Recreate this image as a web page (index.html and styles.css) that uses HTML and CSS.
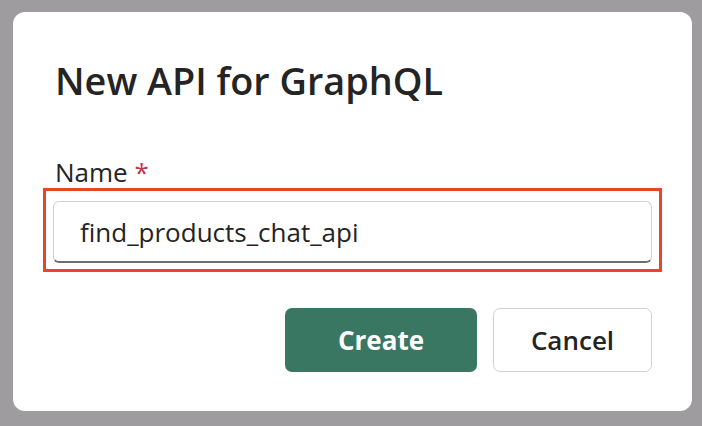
FILE: index.html
```html
<!DOCTYPE html>
<html>
<head>
<meta charset="utf-8">
<link rel="stylesheet" href="styles.css">
</head>
<body>
<div class="dialog">
  <h1 class="title">New API for GraphQL</h1>
  <label class="label">Name <span class="req">*</span></label>
  <div class="highlight">
    <div class="input">find_products_chat_api</div>
  </div>
  <div class="actions">
    <button class="btn primary">Create</button>
    <button class="btn secondary">Cancel</button>
  </div>
</div>
</body>
</html>
```
FILE: styles.css
```css
html, body {
  margin: 0;
  padding: 0;
}
body {
  background: #9e9c9f;
  width: 702px;
  height: 426px;
  overflow: hidden;
  font-family: "Open Sans", "Noto Sans", sans-serif;
  color: #242424;
}
.dialog {
  box-sizing: border-box;
  margin: 12px 0 0 13px;
  width: 679px;
  height: 399px;
  background: #fff;
  border-radius: 12px;
  padding: 46px 40px 0 42px;
  display: flex;
  flex-direction: column;
}
.title {
  margin: 0;
  font-size: 37.8px;
  line-height: 45px;
  font-weight: 600;
  color: #242424;
}
.label {
  margin-top: 53px;
  font-size: 26px;
  line-height: 32px;
  color: #242424;
}
.req {
  color: #c4314b;
}
.highlight {
  margin-left: -12px;
  width: 619px;
  height: 84px;
  box-sizing: border-box;
  border: 3px solid #ea4626;
  padding: 10px 7px 6px 7px;
}
.input {
  box-sizing: border-box;
  height: 62px;
  border: 1px solid #d1d1d1;
  border-bottom: 2px solid #6e6e6e;
  border-radius: 6px;
  padding-left: 26px;
  display: flex;
  align-items: center;
  font-size: 26px;
  color: #242424;
}
.actions {
  margin-top: 36px;
  display: flex;
  justify-content: flex-end;
  gap: 16px;
}
.btn {
  height: 64px;
  border-radius: 7px;
  font-family: "Open Sans", "Noto Sans", sans-serif;
  font-size: 26px;
  font-weight: 600;
  padding: 0;
}
.primary {
  width: 192px;
  background: #3a7763;
  border: none;
  color: #fff;
  font-weight: 700;
}
.secondary {
  width: 159px;
  background: #fff;
  border: 1px solid #d1d1d1;
  color: #242424;
}
```
